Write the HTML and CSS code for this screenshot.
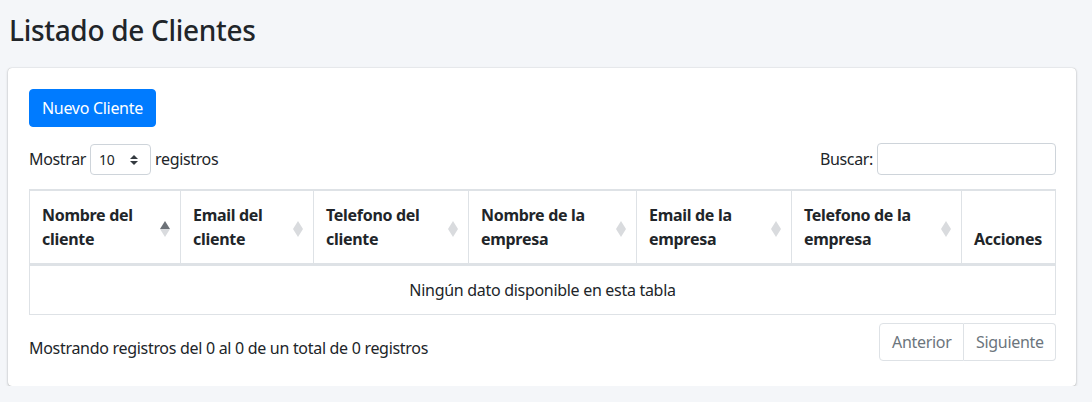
FILE: index.html
```html
<!DOCTYPE html>
<html lang="es">
<head>
<meta charset="utf-8">
<title>Listado de Clientes</title>
<link rel="stylesheet" href="styles.css">
</head>
<body>
<div class="page">
  <h1 class="title">Listado de Clientes</h1>
  <div class="card">
    <div class="card-body">
      <button class="btn-primary" type="button">Nuevo Cliente</button>
      <div class="dt-top">
        <div class="dt-length">
          <span>Mostrar</span>
          <span class="select">10
            <svg class="select-arrow" width="8" height="10" viewBox="0 0 4 5"><path fill="#343a40" d="M2 0L0 2h4zm0 5L0 3h4z"/></svg>
          </span>
          <span>registros</span>
        </div>
        <div class="dt-filter">
          <span>Buscar:</span>
          <span class="search"></span>
        </div>
      </div>
      <table class="dt">
        <colgroup>
          <col class="c1"><col class="c2"><col class="c3"><col class="c4"><col class="c5"><col class="c6"><col class="c7">
        </colgroup>
        <thead>
          <tr>
            <th class="sort sorted">Nombre del cliente<span class="arrows"><i class="up"></i><i class="down"></i></span></th>
            <th class="sort">Email del cliente<span class="arrows"><i class="up"></i><i class="down"></i></span></th>
            <th class="sort">Telefono del cliente<span class="arrows"><i class="up"></i><i class="down"></i></span></th>
            <th class="sort">Nombre de la empresa<span class="arrows"><i class="up"></i><i class="down"></i></span></th>
            <th class="sort">Email de la empresa<span class="arrows"><i class="up"></i><i class="down"></i></span></th>
            <th class="sort">Telefono de la empresa<span class="arrows"><i class="up"></i><i class="down"></i></span></th>
            <th class="last">Acciones</th>
          </tr>
        </thead>
        <tbody>
          <tr><td colspan="7" class="empty">Ningún dato disponible en esta tabla</td></tr>
        </tbody>
      </table>
      <div class="dt-bottom">
        <div class="info">Mostrando registros del 0 al 0 de un total de 0 registros</div>
        <div class="pager">
          <span class="page-link first">Anterior</span>
          <span class="page-link last">Siguiente</span>
        </div>
      </div>
    </div>
  </div>
</div>
</body>
</html>
```

FILE: styles.css
```css
* { box-sizing: border-box; }
html, body { margin: 0; padding: 0; }
body {
  background: #f4f6f9;
  font-family: "Noto Sans", "Open Sans", sans-serif;
  font-size: 16px;
  line-height: 24px;
  color: #212529;
}
.page {
  padding: 0 16px 0 8px;
}
.title {
  margin: 0;
  padding: 12px 0 0 1px;
  height: 68px;
  font-size: 28px;
  line-height: 36px;
  font-weight: 500;
  letter-spacing: -0.3px;
}
.card {
  background: #fff;
  border-radius: 4px;
  box-shadow: 0 0 1px rgba(0,0,0,.3), 0 1px 3px rgba(0,0,0,.2);
}
.card-body {
  padding: 21px 20px 23px 21px;
}
.btn-primary {
  display: block;
  height: 38px;
  padding: 0 12px;
  background: #007bff;
  border: 1px solid #007bff;
  border-radius: 4px;
  color: #fff;
  font: inherit;
  letter-spacing: -0.3px;
}
.dt-top {
  display: flex;
  justify-content: space-between;
  align-items: center;
  margin-top: 16px;
  height: 32px;
  letter-spacing: -0.35px;
}
.dt-length, .dt-filter {
  display: flex;
  align-items: center;
  gap: 4px;
}
.select {
  display: flex;
  align-items: center;
  justify-content: space-between;
  width: 61px;
  height: 31px;
  padding: 2px 12px 0 8px;
  border: 1px solid #ced4da;
  border-radius: 4px;
  font-size: 14px;
}
.select-arrow { display: block; }
.search {
  display: block;
  width: 179px;
  height: 32px;
  border: 1px solid #ced4da;
  border-radius: 4px;
}
.dt {
  width: 100%;
  margin-top: 14px;
  border-collapse: separate;
  border-spacing: 0;
  table-layout: fixed;
  border: 1px solid #dee2e6;
  letter-spacing: -0.3px;
}
.c1 { width: 151px; }
.c2 { width: 133px; }
.c3 { width: 155px; }
.c4 { width: 168px; }
.c5 { width: 155px; }
.c6 { width: 170px; }
.c7 { width: auto; }
.dt th {
  position: relative;
  text-align: left;
  vertical-align: bottom;
  font-weight: 700;
  padding: 12px 30px 12px 12px;
  border-top: 1px solid #dee2e6;
  border-right: 1px solid #dee2e6;
  border-bottom: 2px solid #dee2e6;
}
.dt th.last {
  border-right: 0;
  padding-right: 12px;
}
.arrows {
  position: absolute;
  right: 10px;
  top: 30px;
  display: flex;
  flex-direction: column;
}
.arrows i {
  display: block;
  width: 0;
  height: 0;
  border-left: 5px solid transparent;
  border-right: 5px solid transparent;
}
.arrows .up { border-bottom: 8px solid #d9dbde; }
.arrows .down { border-top: 8px solid #d9dbde; }
.sorted .arrows .up { border-bottom-color: #6c7177; }
.dt td {
  border-top: 1px solid #dee2e6;
  padding: 12px;
}
.dt td.empty { text-align: center; }
.dt-bottom {
  display: flex;
  justify-content: space-between;
  margin-top: 6px;
  letter-spacing: -0.3px;
}
.info {
  padding-top: 15px;
}
.pager {
  display: flex;
  margin: 2px 0;
}
.page-link {
  display: block;
  height: 38px;
  padding: 6px 12px;
  color: #6c757d;
  border: 1px solid #dee2e6;
  background: #fff;
}
.page-link.first { border-radius: 4px 0 0 4px; width: 85px; }
.page-link.last { border-radius: 0 4px 4px 0; border-left: 0; width: 92px; }
```
